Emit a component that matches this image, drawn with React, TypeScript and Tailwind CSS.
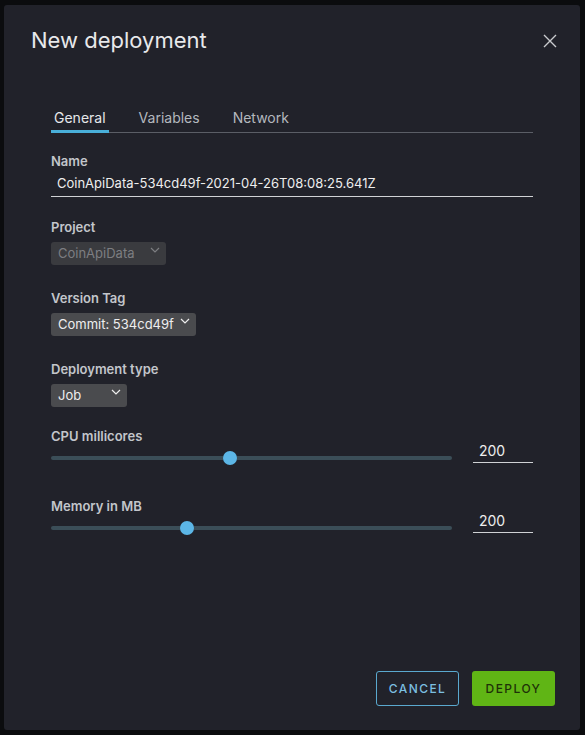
import { useState } from 'react';

const font = { fontFamily: 'Inter, "Noto Sans", sans-serif' };

const Caret = () => (
  <svg width="10" height="6" viewBox="0 0 10 6" className="shrink-0 self-start mt-[5px]">
    <path d="M1 1l4 4 4-4" fill="none" stroke="currentColor" strokeWidth="1.2" />
  </svg>
);

const Select = ({ value, width, disabled = false }: { value: string; width: string; disabled?: boolean }) => (
  <div
    className={`flex items-center justify-between h-[23px] pl-[7px] pr-[6px] rounded-[3px] text-[13px] whitespace-nowrap ${width} ${
      disabled ? 'bg-[#3a3b3f] text-[#7d7e82]' : 'bg-[#4a4b4e] text-[#eeeeee]'
    }`}
  >
    <span className="leading-[23px]">{value}</span>
    <Caret />
  </div>
);

const Label = ({ children, className = '' }: { children: React.ReactNode; className?: string }) => (
  <div className={`text-[13px] leading-[16px] font-semibold text-[#c3c6cb] ${className}`}>{children}</div>
);

const Slider = ({ label, value, max, className = '' }: { label: string; value: number; max: number; className?: string }) => {
  const pct = value / max;
  return (
    <div className={`flex items-end gap-[21px] ${className}`}>
      <div className="flex-1">
        <Label>{label}</Label>
        <div className="relative h-[14px] mt-[7px] flex items-center">
          <div className="w-full h-[4px] bg-[#3b4e58] rounded-full"></div>
          <div
            className="absolute top-0 w-[14px] h-[14px] rounded-full bg-[#5cb6e6]"
            style={{ left: `calc(${pct} * (100% - 14px))` }}
          ></div>
        </div>
      </div>
      <div className="w-[60px] h-[24px] mb-[2px] border-b border-[#d0d2d5] pl-[6px] text-[14px] leading-[23px] text-[#eeeeee]">
        {value}
      </div>
    </div>
  );
};

export default function App() {
  const [tab, setTab] = useState('General');
  const tabs = ['General', 'Variables', 'Network'];

  return (
    <div className="w-[585px] h-[735px] bg-[#0b0c0e] pt-[5px] pl-[4px]" style={font}>
      <div className="w-[576px] h-[725px] bg-[#21222a] rounded-[3px] flex flex-col">
        <div className="flex items-start justify-between pt-[21px] pl-[27px] pr-[23px]">
          <h1 className="text-[22px] leading-[28px] font-normal text-[#e8e9eb]">New deployment</h1>
          <svg width="14" height="14" viewBox="0 0 14 14" className="mt-[8px] text-[#c9cbce]">
            <path d="M1 1l12 12M13 1L1 13" stroke="currentColor" strokeWidth="1.4" />
          </svg>
        </div>

        <div className="px-[47px] mt-[52px]">
          <div className="flex gap-[27px] border-b border-[#5b5e66]">
            {tabs.map((t) => (
              <button
                key={t}
                onClick={() => setTab(t)}
                className={`h-[27px] -mb-px px-[3px] text-[14px] leading-[20px] border-b-[3px] text-left ${
                  tab === t ? 'border-[#49afd9] text-[#e6e8ea]' : 'border-transparent text-[#b4b8be]'
                }`}
              >
                {t}
              </button>
            ))}
          </div>

          <Label className="mt-[20px]">Name</Label>
          <div className="mt-[2px] h-[26px] border-b border-[#d0d2d5] pl-[6px] text-[13px] leading-[25px] text-[#eeeeee]">
            CoinApiData-534cd49f-2021-04-26T08:08:25.641Z
          </div>

          <Label className="mt-[22px]">Project</Label>
          <div className="mt-[7px]">
            <Select value="CoinApiData" width="w-[115px]" disabled />
          </div>

          <Label className="mt-[25px]">Version Tag</Label>
          <div className="mt-[7px]">
            <Select value="Commit: 534cd49f" width="w-[145px]" />
          </div>

          <Label className="mt-[25px]">Deployment type</Label>
          <div className="mt-[7px]">
            <Select value="Job" width="w-[76px]" />
          </div>

          <Slider label="CPU millicores" value={200} max={450} className="mt-[21px]" />
          <Slider label="Memory in MB" value={200} max={600} className="mt-[33px]" />
        </div>

        <div className="mt-auto flex justify-end gap-[13px] pr-[25px] pb-[24px]">
          <button className="w-[83px] h-[35px] rounded-[3px] border border-[#5aa9cf] text-[#7cbfe0] text-[12px] font-medium tracking-[0.12em]">
            CANCEL
          </button>
          <button className="w-[83px] h-[35px] rounded-[3px] bg-[#60b515] text-[#1e3108] text-[12px] font-medium tracking-[0.12em]">
            DEPLOY
          </button>
        </div>
      </div>
    </div>
  );
}
